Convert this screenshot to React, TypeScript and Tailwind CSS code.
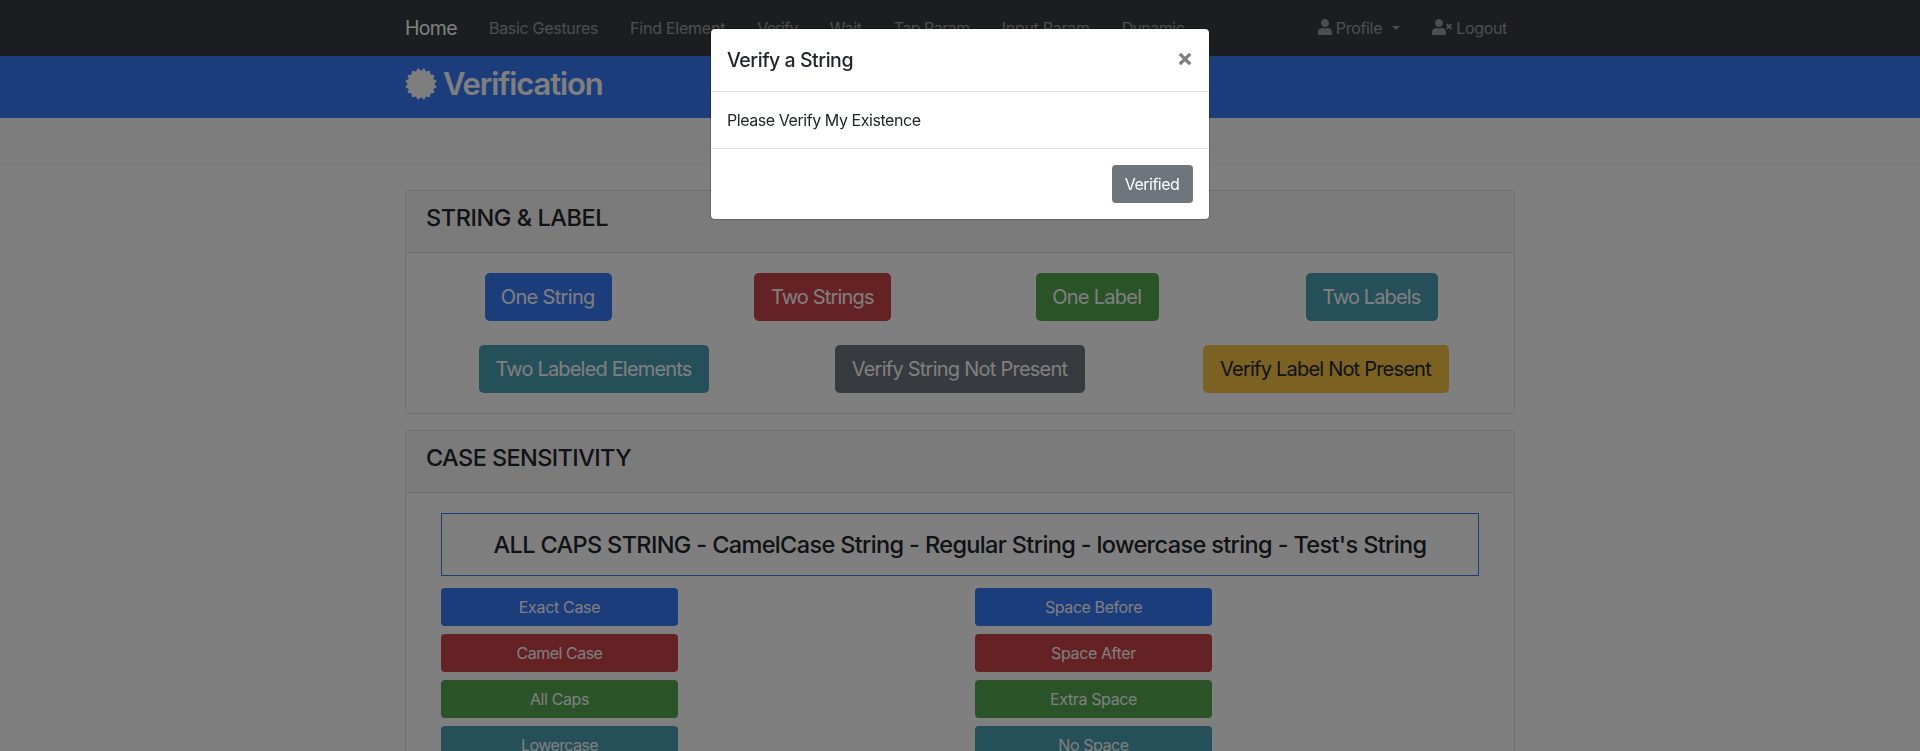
import type { ReactNode } from "react";
import { FaUser, FaUserTimes } from "react-icons/fa";

const navLinks = [
  { label: "Basic Gestures", style: "tracking-[-0.019em]" },
  { label: "Find Element", style: "tracking-[-0.015em]" },
  { label: "Verify", style: "tracking-[-0.042em]" },
  { label: "Wait", style: "tracking-[-0.016em]" },
  { label: "Tap Param", style: "tracking-[-0.033em]" },
  { label: "Input Param", style: "tracking-[-0.017em]" },
  { label: "Dynamic", style: "tracking-[-0.029em]" },
];

const firstRow = [
  { label: "One String", style: "w-[127px] pr-px bg-[#387af6] text-white tracking-[-0.033em]" },
  { label: "Two Strings", style: "w-[137px] pr-px bg-[#cb444a] text-white tracking-[-0.042em]" },
  { label: "One Label", style: "w-[123px] pr-px bg-[#54a651] text-white tracking-[-0.037em]" },
  { label: "Two Labels", style: "w-[132px] pr-px bg-[#4ba0b5] text-white tracking-[-0.045em]" },
];

const secondRow = [
  { label: "Two Labeled Elements", style: "w-[230px] pr-px bg-[#4ba0b5] text-white tracking-[-0.0415em]" },
  { label: "Verify String Not Present", style: "w-[250px] pr-px bg-[#6f757c] text-white tracking-[-0.0378em]" },
  { label: "Verify Label Not Present", style: "w-[246px] pr-px bg-[#f6c344] text-[#212529] tracking-[-0.0395em]" },
];

const caseColumns = [
  [
    { label: "Exact Case", style: "bg-[#387af6] tracking-[-0.021em]" },
    { label: "Camel Case", style: "bg-[#cb444a] tracking-[-0.031em]" },
    { label: "All Caps", style: "bg-[#54a651] tracking-[-0.025em]" },
    { label: "Lowercase", style: "bg-[#4ba0b5] tracking-[-0.038em]" },
  ],
  [
    { label: "Space Before", style: "bg-[#387af6] tracking-[-0.026em]" },
    { label: "Space After", style: "bg-[#cb444a] tracking-[-0.024em]" },
    { label: "Extra Space", style: "bg-[#54a651] tracking-[-0.023em]" },
    { label: "No Space", style: "bg-[#4ba0b5] tracking-[-0.027em]" },
  ],
];

const badgePoints = Array.from({ length: 32 }, (_, i) => {
  const angle = ((i + 1) * Math.PI) / 16;
  const radius = i % 2 ? 12.7 : 15.6;
  return `${16 + radius * Math.sin(angle)},${16 - radius * Math.cos(angle)}`;
}).join(" ");

function BadgeIcon() {
  return (
    <svg viewBox="0 0 32 32" className="mr-1.5 size-8 fill-current stroke-current" strokeWidth="0.9" strokeLinejoin="round">
      <polygon points={badgePoints} />
    </svg>
  );
}

function LargeButton({ label, style }: { label: string; style: string }) {
  return (
    <div className="flex justify-center">
      <button className={`h-12 rounded-[4.8px] text-[20px] leading-[30px] whitespace-nowrap ${style}`}>{label}</button>
    </div>
  );
}

function Card({ title, titleStyle, children }: { title: string; titleStyle: string; children: ReactNode }) {
  return (
    <section className="mb-4 rounded border border-[#dfdfdf] bg-white">
      <header className="h-[62px] rounded-t border-b border-[#dfdfdf] bg-[#f7f7f7] px-5 pt-3">
        <h4 className={`text-[23.5px] leading-[29px] font-medium ${titleStyle}`}>{title}</h4>
      </header>
      {children}
    </section>
  );
}

function Navbar() {
  return (
    <nav className="h-14 bg-[#393b41]">
      <div className="mx-auto flex h-full w-[1110px] items-center text-[16px] leading-6 text-white/50">
        <a className="mr-4 w-[52px] text-[19.5px] tracking-[-0.035em] whitespace-nowrap text-white">Home</a>
        {navLinks.map((link) => (
          <a key={link.label} className={`px-4 whitespace-nowrap ${link.style}`}>
            {link.label}
          </a>
        ))}
        <a className="ml-auto flex items-center px-4 tracking-[-0.02em]">
          <FaUser className="mr-1 h-4 w-3.5 -translate-y-px" />
          Profile
          <span className="ml-2.5 border-x-[4.8px] border-t-[4.8px] border-x-transparent border-t-current" />
        </a>
        <a className="flex items-center pr-2 pl-4 tracking-[-0.02em]">
          <FaUserTimes className="mr-1 h-4 w-5 -translate-y-px" />
          Logout
        </a>
      </div>
    </nav>
  );
}

function VerifyDialog() {
  return (
    <div className="fixed inset-0 flex items-start justify-center bg-black/50 pt-7">
      <div role="dialog" className="w-[500px] rounded-[4.8px] border border-black/20 bg-white bg-clip-padding">
        <div className="flex h-[63px] items-start justify-between border-b border-[#dfe2e6] p-4">
          <h5 className="text-[19.5px] leading-[30px] font-medium tracking-[-0.023em]">Verify a String</h5>
          <button aria-label="Close" className="mt-[7px] mr-px">
            <svg viewBox="0 0 14 14" className="size-3.5 stroke-[#7f7f7f]" strokeWidth="3.3">
              <path d="M1.8 1.8 12.2 12.2M12.2 1.8 1.8 12.2" />
            </svg>
          </button>
        </div>
        <p className="p-4 text-[16px] leading-6 tracking-[-0.0275em]">Please Verify My Existence</p>
        <div className="flex justify-end border-t border-[#dfe2e6] p-4">
          <button className="h-[38px] w-[81px] rounded bg-[#6f757c] pr-px text-[16px] leading-6 tracking-[-0.032em] text-white">
            Verified
          </button>
        </div>
      </div>
    </div>
  );
}

export default function App() {
  return (
    <div className="h-screen overflow-hidden bg-white font-['Inter',sans-serif] text-[#212529]">
      <Navbar />
      <div className="h-[62px] bg-[#387af6] pt-2">
        <h2 className="mx-auto flex w-[1110px] items-center text-[31px] leading-[39px] font-semibold tracking-[-0.037em] text-white">
          <BadgeIcon />
          Verification
        </h2>
      </div>
      <div className="h-12 bg-[#fafafa]" />
      <main className="mx-auto mt-6 w-[1110px]">
        <Card title="STRING & LABEL" titleStyle="tracking-[-0.0186em]">
          <div className="flex flex-col gap-6 px-[5px] py-5">
            <div className="grid grid-cols-4">
              {firstRow.map((button) => (
                <LargeButton key={button.label} {...button} />
              ))}
            </div>
            <div className="grid grid-cols-3">
              {secondRow.map((button) => (
                <LargeButton key={button.label} {...button} />
              ))}
            </div>
          </div>
        </Card>
        <Card title="CASE SENSITIVITY" titleStyle="tracking-[-0.0255em]">
          <div className="px-[35px] py-5">
            <h4 className="mb-3 h-[63px] border border-[#387af6] py-4 text-center text-[23.5px] leading-[29px] font-medium tracking-[-0.0275em] whitespace-nowrap">
              ALL CAPS STRING - CamelCase String - Regular String - lowercase string - Test's String
            </h4>
            <div className="grid grid-cols-[534px_1fr]">
              {caseColumns.map((column) => (
                <div key={column[0].label} className="flex w-[237px] flex-col gap-2">
                  {column.map((button) => (
                    <button key={button.label} className={`h-[38px] rounded text-[16px] leading-6 text-white ${button.style}`}>
                      {button.label}
                    </button>
                  ))}
                </div>
              ))}
            </div>
          </div>
        </Card>
      </main>
      <VerifyDialog />
    </div>
  );
}
